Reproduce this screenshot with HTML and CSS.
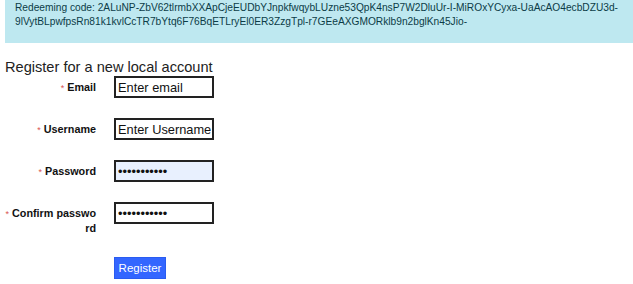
FILE: index.html
```html
<!DOCTYPE html>
<html>
<head>
<meta charset="utf-8">
<link rel="stylesheet" href="styles.css">
</head>
<body>
<div class="alert"><span class="nowrap">Redeeming code: 2ALuNP-ZbV62tlrmbXXApCjeEUDbYJnpkfwqybLUzne53QpK4nsP7W2DluUr-I-MiROxYCyxa-UaAcAO4ecbDZU3d-</span><br>9lVytBLpwfpsRn81k1kvlCcTR7bYtq6F76BqETLryEl0ER3ZzgTpl-r7GEeAXGMORklb9n2bglKn45Jio-</div>
<h2 class="title">Register for a new local account</h2>
<form class="form">
  <div class="row">
    <label class="label"><span class="req">*</span> Email</label>
    <input class="field" type="text" value="Enter email">
  </div>
  <div class="row">
    <label class="label"><span class="req">*</span> Username</label>
    <input class="field" type="text" value="Enter Username">
  </div>
  <div class="row">
    <label class="label"><span class="req">*</span> Password</label>
    <input class="field filled" type="password" value="12345678901">
  </div>
  <div class="row">
    <label class="label"><span class="req">*</span> Confirm password</label>
    <input class="field" type="password" value="12345678901">
  </div>
  <div class="row">
    <span class="label"></span>
    <button class="btn" type="button">Register</button>
  </div>
</form>
</body>
</html>
```
FILE: styles.css
```css
html, body {
  margin: 0;
  padding: 0;
  background: #fff;
}
body {
  padding: 0 0 0 5px;
  font-family: "Liberation Sans", Arial, sans-serif;
  color: #212529;
}
.alert {
  background: #bee8f0;
  color: #0c3c47;
  font-size: 10.2px;
  line-height: 14px;
  padding: 1px 2px 14px 10px;
}
.nowrap {
  white-space: nowrap;
}
.title {
  font-size: 14.6px;
  font-weight: normal;
  color: #222;
  margin: 15px 0 0 0;
  line-height: 18px;
}
.form {
  display: flex;
  flex-direction: column;
  gap: 20px;
  margin-top: 0;
}
.row {
  display: flex;
  align-items: flex-start;
}
.label {
  width: 91px;
  padding-right: 18px;
  text-align: right;
  font-size: 10.8px;
  font-weight: bold;
  color: #111;
  line-height: 14px;
  padding-top: 4px;
  word-break: break-all;
  flex: none;
}
.req {
  color: #d9534f;
  font-weight: normal;
  font-size: 9px;
}
.field {
  box-sizing: border-box;
  width: 100px;
  height: 22px;
  border: 2px solid #222;
  padding: 0 1px 0 2px;
  font-family: "Liberation Sans", Arial, sans-serif;
  font-size: 12.8px;
  color: #111;
  margin: 0;
  background: #fff;
}
.filled {
  background: #e8f0fe;
}
.btn {
  margin-top: 2px;
  background: #3366ff;
  color: #fff;
  border: 1px solid #2a5cf0;
  font-family: "Liberation Sans", Arial, sans-serif;
  font-size: 11.5px;
  height: 22px;
  width: 52px;
  padding: 0;
}
```
